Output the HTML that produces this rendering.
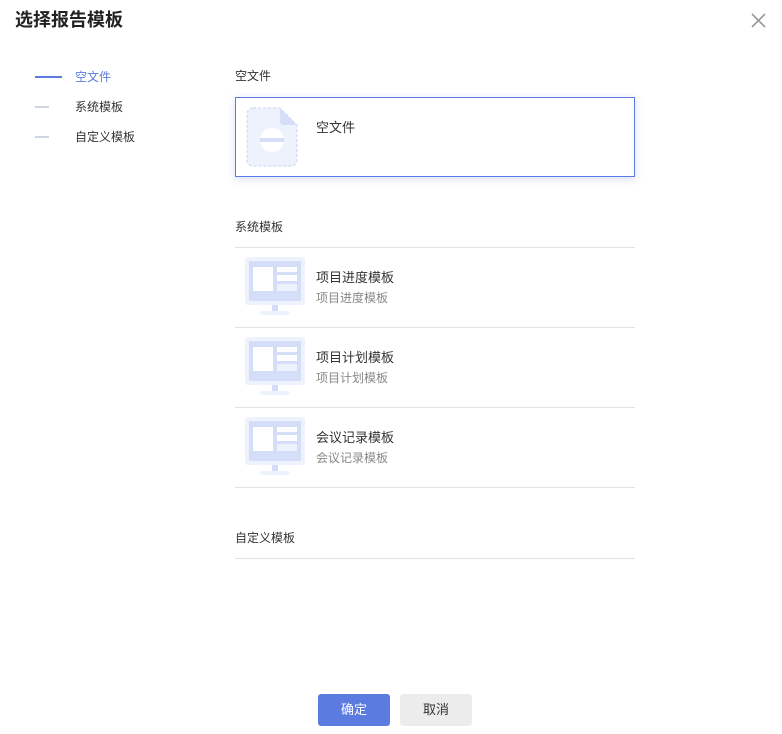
<!DOCTYPE html>
<html><head><meta charset="utf-8"><style>
*{margin:0;padding:0;box-sizing:border-box}
body{width:782px;height:734px;background:#fff;font-family:"Liberation Sans","Noto Sans CJK SC",sans-serif;color:#333;position:relative;overflow:hidden}
.a{position:absolute}
.t{font-size:12px;line-height:16px;white-space:nowrap}
.line{height:1px;background:#e2e2e2;left:235px;width:400px}
.ic{left:245px;width:60px;height:60px}
</style></head><body>
<div class="a" style="left:15px;top:8px;font-size:18px;font-weight:bold;color:#222;line-height:24px">选择报告模板</div>
<svg class="a" style="left:751px;top:13px" width="15" height="15"><path d="M1 1L14 14M14 1L1 14" stroke="#999" stroke-width="1.6"/></svg>

<div class="a" style="left:35px;top:76px;width:27px;height:2px;background:#5b7be0"></div>
<div class="a t" style="left:75px;top:69px;color:#5b7be0">空文件</div>
<div class="a" style="left:35px;top:106px;width:14px;height:1.5px;background:#cfd6e4"></div>
<div class="a t" style="left:75px;top:99px">系统模板</div>
<div class="a" style="left:35px;top:136px;width:14px;height:1.5px;background:#cfd6e4"></div>
<div class="a t" style="left:75px;top:129px">自定义模板</div>

<div class="a t" style="left:235px;top:68px">空文件</div>
<div class="a" style="left:235px;top:97px;width:400px;height:80px;border:1px solid #5b7be0;box-shadow:0 2px 8px rgba(91,123,224,.25)"></div>
<svg class="a" style="left:246px;top:107px" width="52" height="60">
<path d="M7 1H34L51 18V53A6 6 0 0 1 45 59H7A6 6 0 0 1 1 53V7A6 6 0 0 1 7 1Z" fill="#eef2fd" stroke="#c9d4f2" stroke-dasharray="3 2"/>
<path d="M34 1V14A4 4 0 0 0 38 18H51Z" fill="#d5def8"/>
<circle cx="26" cy="33" r="12" fill="#fff"/>
<rect x="14" y="31" width="24" height="4" fill="#d5def8"/>
</svg>
<div class="a" style="left:316px;top:120px;font-size:13px;line-height:16px">空文件</div>

<div class="a t" style="left:235px;top:219px">系统模板</div>
<div class="a line" style="top:247px"></div>
<div class="a line" style="top:327px"></div>
<div class="a line" style="top:407px"></div>
<div class="a line" style="top:487px"></div>

<svg width="0" height="0" style="position:absolute"><defs><g id="m">
<rect x="0" y="0" width="60" height="48" rx="3" fill="#eef2fd"/>
<rect x="4" y="4" width="52" height="40" fill="#d5def8"/>
<rect x="8" y="10" width="20" height="24" fill="#fff"/>
<rect x="32" y="10" width="20" height="5" fill="#fff"/>
<rect x="32" y="18" width="20" height="6" fill="#fff"/>
<rect x="32" y="27" width="20" height="7" fill="#eef2fd"/>
<rect x="27" y="48" width="6" height="6" fill="#d5def8"/>
<rect x="15" y="54" width="30" height="4" rx="2" fill="#eef2fd"/>
</g></defs></svg>

<svg class="a ic" style="top:257px"><use href="#m"/></svg>
<div class="a" style="left:316px;top:270px;font-size:13px;line-height:16px">项目进度模板</div>
<div class="a t" style="left:316px;top:290px;color:#888">项目进度模板</div>

<svg class="a ic" style="top:337px"><use href="#m"/></svg>
<div class="a" style="left:316px;top:350px;font-size:13px;line-height:16px">项目计划模板</div>
<div class="a t" style="left:316px;top:370px;color:#888">项目计划模板</div>

<svg class="a ic" style="top:417px"><use href="#m"/></svg>
<div class="a" style="left:316px;top:430px;font-size:13px;line-height:16px">会议记录模板</div>
<div class="a t" style="left:316px;top:450px;color:#888">会议记录模板</div>

<div class="a t" style="left:235px;top:530px">自定义模板</div>
<div class="a line" style="top:558px"></div>

<div class="a" style="left:318px;top:694px;width:72px;height:32px;background:#5b7be0;border-radius:3px;color:#fff;font-size:13px;line-height:32px;text-align:center">确定</div>
<div class="a" style="left:400px;top:694px;width:72px;height:32px;background:#ececec;border-radius:3px;color:#333;font-size:13px;line-height:32px;text-align:center">取消</div>
</body></html>
